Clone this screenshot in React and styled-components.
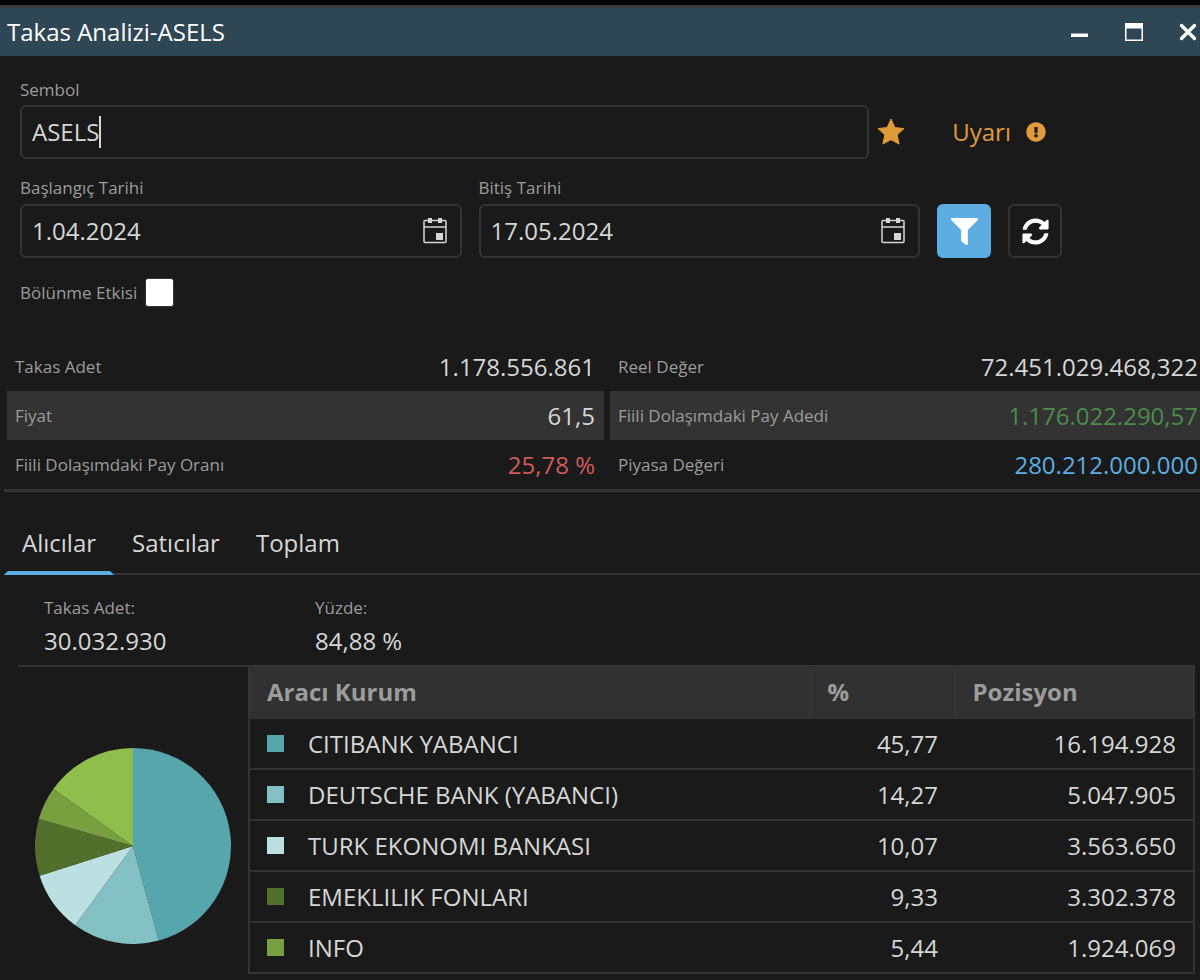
import { useState } from "react";
import styled, { createGlobalStyle } from "styled-components";
import { FaExclamationCircle, FaFilter, FaSyncAlt } from "react-icons/fa";

const summaryLeft = [
  { label: "Takas Adet", value: "1.178.556.861" },
  { label: "Fiyat", value: "61,5" },
  { label: "Fiili Dolaşımdaki Pay Oranı", value: "25,78 %", color: "#d15b5b" },
];

const summaryRight = [
  { label: "Reel Değer", value: "72.451.029.468,322" },
  { label: "Fiili Dolaşımdaki Pay Adedi", value: "1.176.022.290,57", color: "#4c8c4a" },
  { label: "Piyasa Değeri", value: "280.212.000.000", color: "#5dade2" },
];

const brokers = [
  { name: "CITIBANK YABANCI", percent: 45.77, position: "16.194.928", color: "#57a6ab" },
  { name: "DEUTSCHE BANK (YABANCI)", percent: 14.27, position: "5.047.905", color: "#82c0c3" },
  { name: "TURK EKONOMI BANKASI", percent: 10.07, position: "3.563.650", color: "#bce0e2" },
  { name: "EMEKLILIK FONLARI", percent: 9.33, position: "3.302.378", color: "#52702c" },
  { name: "INFO", percent: 5.44, position: "1.924.069", color: "#789f40" },
];

const OTHERS_COLOR = "#8fbe4d";

const tabs = ["Alıcılar", "Satıcılar", "Toplam"];

const formatPercent = (n) => n.toFixed(2).replace(".", ",");

const point = (percent) => {
  const angle = (percent / 100) * Math.PI * 2;
  return `${100 + 100 * Math.sin(angle)} ${100 - 100 * Math.cos(angle)}`;
};

const PieChart = ({ data }) => {
  let total = 0;
  const slices = data.map(({ name, percent, color }) => {
    const from = total;
    total += percent;
    return { name, color, from, to: total };
  });
  slices.push({ name: "rest", color: OTHERS_COLOR, from: total, to: 100 });

  return (
    <Pie viewBox="0 0 200 200" aria-hidden="true">
      {slices.map(({ name, color, from, to }) => (
        <path
          key={name}
          fill={color}
          d={`M100 100L${point(from)}A100 100 0 ${to - from > 50 ? 1 : 0} 1 ${point(to)}Z`}
        />
      ))}
    </Pie>
  );
};

const CalendarIcon = () => (
  <svg width="24" height="26" viewBox="0 0 24 26" fill="none">
    <rect x="1" y="2.500" width="22" height="22" rx="1" stroke="#d6d6d6" strokeWidth="1.5" />
    <path d="M1 9h22" stroke="#d6d6d6" strokeWidth="1.5" />
    <path d="M5 0h4v5H5zM15 0h4v5h-4zM13 15h7v7h-7z" fill="#d6d6d6" />
  </svg>
);

const DateField = ({ id, label, value }) => (
  <Field>
    <Label htmlFor={id}>{label}</Label>
    <InputBox>
      <DateInput id={id} defaultValue={value} />
      <IconButton type="button" aria-label="Takvim">
        <CalendarIcon />
      </IconButton>
    </InputBox>
  </Field>
);

const Summary = ({ rows, edge }) => (
  <SummaryList>
    {rows.map(({ label, value, color }) => (
      <SummaryRow key={label} $edge={edge}>
        <dt>{label}</dt>
        <SummaryValue $color={color}>{value}</SummaryValue>
      </SummaryRow>
    ))}
  </SummaryList>
);

const App = () => {
  const [active, setActive] = useState(tabs[0]);

  return (
    <>
      <GlobalStyle />
      <Window>
        <TitleBar>
          <h1>Takas Analizi-ASELS</h1>
          <WindowButtons>
            <IconButton type="button" aria-label="Küçült">
              <svg width="18" height="18" viewBox="0 0 18 18">
                <path d="M0 10.5h17v3.5H0z" fill="#fff" />
              </svg>
            </IconButton>
            <IconButton type="button" aria-label="Büyüt">
              <svg width="18" height="18" viewBox="0 0 18 18">
                <path fillRule="evenodd" d="M0 0h18v18H0zM1.5 5.5v11h15v-11z" fill="#fff" />
              </svg>
            </IconButton>
            <IconButton type="button" aria-label="Kapat">
              <svg width="18" height="18" viewBox="0 0 18 18">
                <path
                  d="M2.5 2.5l13 13M15.5 2.5l-13 13"
                  stroke="#fff"
                  strokeWidth="3.4"
                  strokeLinecap="round"
                />
              </svg>
            </IconButton>
          </WindowButtons>
        </TitleBar>

        <Form onSubmit={(e) => e.preventDefault()}>
          <Label htmlFor="symbol">Sembol</Label>
          <SymbolRow>
            <SymbolBox>
              <SymbolInput id="symbol" defaultValue="ASELS" />
              <Caret />
            </SymbolBox>
            <IconButton type="button" aria-label="Favori">
              <svg width="28" height="28" viewBox="0 0 28 28">
                <path
                  d="M14 1l3.8 8.6 9.2 1-6.9 6.2 2 9.2-8.1-4.3L5.9 26l2-9.2L1 10.6l9.2-1z"
                  fill="#e09a3a"
                  stroke="#e09a3a"
                  strokeLinejoin="round"
                />
              </svg>
            </IconButton>
            <WarningButton type="button">
              Uyarı
              <FaExclamationCircle size={20} />
            </WarningButton>
          </SymbolRow>
          <DateRow>
            <DateField id="start" label="Başlangıç Tarihi" value="1.04.2024" />
            <DateField id="end" label="Bitiş Tarihi" value="17.05.2024" />
            <SquareButton type="submit" aria-label="Filtrele" $primary>
              <FaFilter size={27} />
            </SquareButton>
            <SquareButton type="button" aria-label="Yenile">
              <FaSyncAlt size={27} />
            </SquareButton>
          </DateRow>
          <CheckRow>
            <Label htmlFor="split">Bölünme Etkisi</Label>
            <Checkbox id="split" type="checkbox" />
          </CheckRow>
        </Form>

        <SummaryPanel>
          <Summary rows={summaryLeft} edge={9} />
          <Summary rows={summaryRight} edge={2} />
        </SummaryPanel>

        <TabBar role="tablist">
          {tabs.map((tab) => (
            <Tab
              key={tab}
              type="button"
              role="tab"
              aria-selected={tab === active}
              $active={tab === active}
              onClick={() => setActive(tab)}
            >
              {tab}
            </Tab>
          ))}
        </TabBar>

        <Content>
          <Totals>
            <div>
              <dt>Takas Adet:</dt>
              <dd>30.032.930</dd>
            </div>
            <div>
              <dt>Yüzde:</dt>
              <dd>84,88 %</dd>
            </div>
          </Totals>
          <Split>
            <ChartPane>
              <PieChart data={brokers} />
            </ChartPane>
            <Table>
              <colgroup>
                <col />
                <col width="145" />
                <col width="239" />
              </colgroup>
              <thead>
                <tr>
                  <th>Aracı Kurum</th>
                  <th>%</th>
                  <th>Pozisyon</th>
                </tr>
              </thead>
              <tbody>
                {brokers.map(({ name, percent, position, color }) => (
                  <tr key={name}>
                    <td>
                      <Broker>
                        <Swatch $color={color} />
                        {name}
                      </Broker>
                    </td>
                    <NumberCell>{formatPercent(percent)}</NumberCell>
                    <NumberCell>{position}</NumberCell>
                  </tr>
                ))}
              </tbody>
            </Table>
          </Split>
        </Content>
      </Window>
    </>
  );
};

export default App;

const GlobalStyle = createGlobalStyle`
* {
  box-sizing: border-box;
}

body {
  margin: 0;
  background: #1a1a1a;
  color: #d6d6d6;
  font-family: "Open Sans", "Noto Sans", sans-serif;
  font-size: 24px;
  line-height: 32px;
}

h1, dl, dd {
  margin: 0;
}

button, input {
  font: inherit;
  color: inherit;
}
`;

const Window = styled.main`
  border-top: 5px solid #000;
`;

const TitleBar = styled.header`
  display: flex;
  align-items: center;
  justify-content: space-between;
  height: 51px;
  padding: 0 3px 0 7px;
  border-top: 3px solid #3a3a3e;
  background: #2f4655;
  color: #fff;

  h1 {
    font-size: 24px;
    font-weight: 400;
  }
`;

const WindowButtons = styled.div`
  display: flex;
  gap: 36px;
`;

const IconButton = styled.button`
  display: flex;
  padding: 0;
  border: 0;
  background: none;
  cursor: pointer;
`;

const Form = styled.form`
  padding: 22px 20px 0;
`;

const Label = styled.label`
  display: block;
  color: #9c9c9c;
  font-size: 17px;
  line-height: 24px;
`;

const SymbolRow = styled.div`
  display: flex;
  align-items: center;
  gap: 8px;
  margin: 3px 134px 17px 0;
`;

const InputBox = styled.div`
  display: flex;
  align-items: center;
  height: 54px;
  padding: 0 13px 0 10px;
  border: 2px solid #343434;
  border-radius: 6px;
`;

const SymbolBox = styled(InputBox)`
  flex: 1;
`;

const TextInput = styled.input`
  min-width: 0;
  padding: 0;
  border: 0;
  outline: 0;
  background: none;
`;

const SymbolInput = styled(TextInput)`
  field-sizing: content;
  caret-color: transparent;
`;

const DateInput = styled(TextInput)`
  flex: 1;
`;

const Caret = styled.span`
  width: 2px;
  height: 32px;
  background: #d6d6d6;
`;

const WarningButton = styled(IconButton)`
  align-items: center;
  gap: 15px;
  margin-left: 39px;
  color: #e09a3a;
`;

const DateRow = styled.div`
  display: flex;
  align-items: flex-end;
  gap: 17px;
  margin-right: 118px;
`;

const Field = styled.div`
  display: flex;
  flex: 1;
  flex-direction: column;
  gap: 4px;
`;

const SquareButton = styled.button`
  display: flex;
  align-items: center;
  justify-content: center;
  width: 54px;
  height: 54px;
  padding: 0;
  border: 2px solid ${({ $primary }) => ($primary ? "#5dade2" : "#343434")};
  border-radius: 6px;
  background: ${({ $primary }) => ($primary ? "#5dade2" : "none")};
  color: #fff;
  cursor: pointer;
`;

const CheckRow = styled.div`
  display: flex;
  align-items: center;
  gap: 8px;
  margin-top: 20px;
`;

const Checkbox = styled.input`
  appearance: none;
  width: 29px;
  height: 29px;
  margin: 0;
  border: 1px solid #343434;
  border-radius: 3px;
  background: #fff;

  &:checked {
    background: #5dade2;
  }
`;

const SummaryPanel = styled.section`
  display: grid;
  grid-template-columns: 597fr 590fr;
  gap: 6px;
  margin: 35px 0 0 4px;
  padding-left: 3px;
  border-bottom: 3px solid #343434;
`;

const SummaryList = styled.dl`
  min-width: 0;
`;

const SummaryRow = styled.div`
  display: flex;
  align-items: center;
  justify-content: space-between;
  height: 49px;
  padding: 0 ${({ $edge }) => $edge}px 0 8px;

  &:nth-child(even) {
    background: #333;
  }

  dt {
    color: #9c9c9c;
    font-size: 17px;
  }
`;

const SummaryValue = styled.dd`
  color: ${({ $color }) => $color || "#d6d6d6"};
`;

const TabBar = styled.div`
  display: flex;
  margin: 19px 0 0 4px;
  border-bottom: 2px solid #343434;
`;

const Tab = styled.button`
  height: 64px;
  margin-bottom: -2px;
  padding: 4px 14px 0;
  border: 4px solid transparent;
  border-top: 0;
  border-bottom-color: ${({ $active }) => ($active ? "#5dade2" : "transparent")};
  background: none;
  cursor: pointer;
`;

const Content = styled.section`
  padding: 20px 5px 0 18px;
`;

const Totals = styled.dl`
  display: flex;
  padding: 0 26px 4px;
  border-bottom: 2px solid #343434;

  div {
    width: 271px;
  }

  dt {
    color: #9c9c9c;
    font-size: 17px;
    line-height: 26px;
  }

  dd {
    line-height: 40px;
  }
`;

const Split = styled.div`
  display: flex;
`;

const ChartPane = styled.div`
  display: flex;
  align-items: center;
  width: 230px;
  padding: 50px 17px 0;
`;

const Pie = styled.svg`
  width: 100%;
  height: auto;
`;

const Table = styled.table`
  flex: 1;
  table-layout: fixed;
  border-collapse: collapse;
  border: 2px solid #343434;
  border-top: 0;

  th {
    height: 51px;
    padding: 0 17px;
    border-right: 1px solid #383838;
    border-bottom: 2px solid #313131;
    background: #313131;
    color: #9c9c9c;
    font-weight: 700;
    text-align: left;
  }

  td {
    height: 51px;
    padding: 0 17px;
    border-bottom: 2px solid #343434;
  }
`;

const NumberCell = styled.td`
  text-align: right;
`;

const Broker = styled.div`
  display: flex;
  align-items: center;
  gap: 24px;
`;

const Swatch = styled.span`
  width: 17px;
  height: 17px;
  background: ${({ $color }) => $color};
`;
